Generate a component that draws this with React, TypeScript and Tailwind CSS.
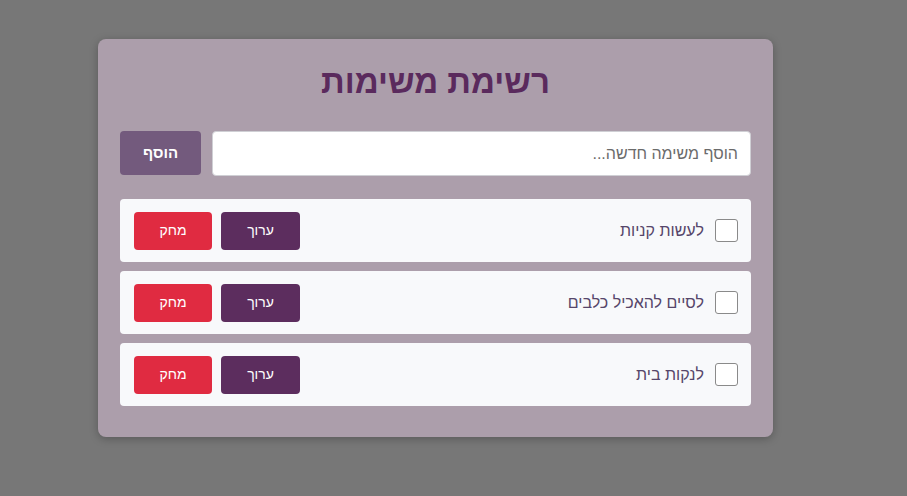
const tasks = ['לעשות קניות', 'לסיים להאכיל כלבים', 'לנקות בית'];

export default function App() {
  return (
    <div
      dir="rtl"
      className="min-h-screen w-full bg-[#777777] pt-[39px]"
      style={{ fontFamily: '"Liberation Sans", Arial, sans-serif' }}
    >
      <div
        className="w-[675px] rounded-lg bg-[#ac9eab] px-[22px] pt-[22px] pb-[31px] shadow-[0_2px_8px_rgba(0,0,0,0.25)]"
        style={{ marginLeft: 98, marginRight: 'auto' }}
      >
        <h1 className="h-[42px] text-center text-[33px] font-bold leading-[42px] text-[#5a2a5d]">
          רשימת משימות
        </h1>
        <div className="mt-[28px] flex gap-[11px]">
          <input
            placeholder="הוסף משימה חדשה..."
            className="h-[45px] flex-1 rounded border border-[#cfcfd4] bg-white px-3 text-[16px] text-[#333] placeholder:text-[#6b6b6b] outline-none"
          />
          <button className="h-[44px] w-[81px] rounded bg-[#735a7d] text-[15px] font-bold text-white">
            הוסף
          </button>
        </div>
        <ul className="mt-[23px] flex flex-col gap-[9px]">
          {tasks.map((t) => (
            <li
              key={t}
              className="flex h-[63px] items-center justify-between rounded bg-[#f8f9fb] pr-[13px] pl-[14px]"
            >
              <label className="flex items-center gap-[11px] text-[16px] text-[#56466a]">
                <span className="h-[23px] w-[23px] rounded-[3px] border border-[#8a8a8a] bg-white" />
                {t}
              </label>
              <div className="flex gap-[9px]">
                <button className="h-[38px] w-[79px] rounded bg-[#5c2d5e] text-[14px] text-white">
                  ערוך
                </button>
                <button className="h-[38px] w-[78px] rounded bg-[#e02b41] text-[14px] text-white">
                  מחק
                </button>
              </div>
            </li>
          ))}
        </ul>
      </div>
    </div>
  );
}
